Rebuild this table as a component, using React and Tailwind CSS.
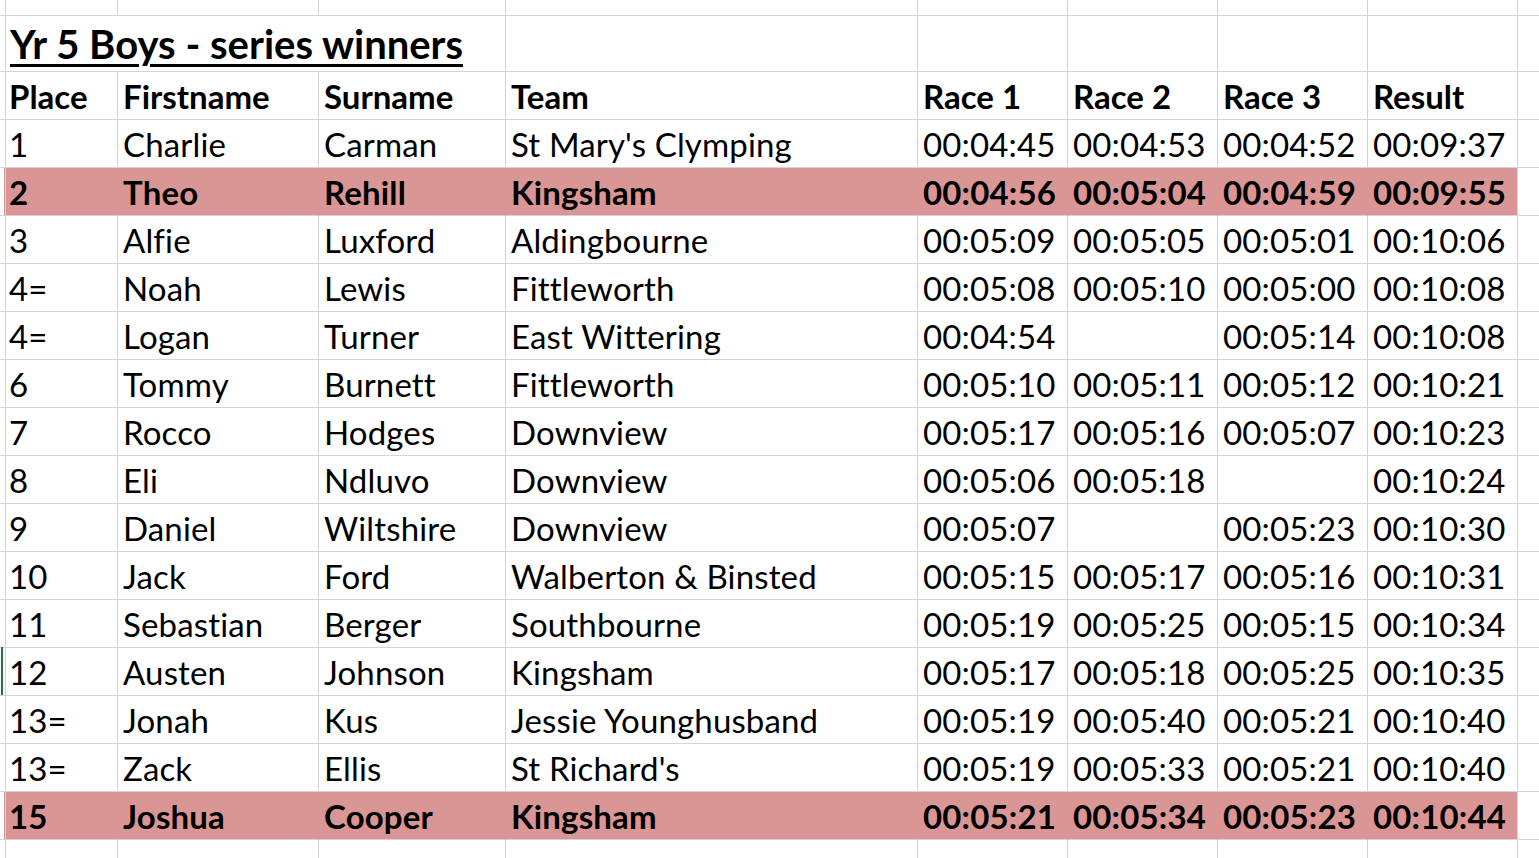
const rows = [
  ['1', 'Charlie', 'Carman', "St Mary's Clymping", '00:04:45', '00:04:53', '00:04:52', '00:09:37'],
  ['2', 'Theo', 'Rehill', 'Kingsham', '00:04:56', '00:05:04', '00:04:59', '00:09:55', true],
  ['3', 'Alfie', 'Luxford', 'Aldingbourne', '00:05:09', '00:05:05', '00:05:01', '00:10:06'],
  ['4=', 'Noah', 'Lewis', 'Fittleworth', '00:05:08', '00:05:10', '00:05:00', '00:10:08'],
  ['4=', 'Logan', 'Turner', 'East Wittering', '00:04:54', '', '00:05:14', '00:10:08'],
  ['6', 'Tommy', 'Burnett', 'Fittleworth', '00:05:10', '00:05:11', '00:05:12', '00:10:21'],
  ['7', 'Rocco', 'Hodges', 'Downview', '00:05:17', '00:05:16', '00:05:07', '00:10:23'],
  ['8', 'Eli', 'Ndluvo', 'Downview', '00:05:06', '00:05:18', '', '00:10:24'],
  ['9', 'Daniel', 'Wiltshire', 'Downview', '00:05:07', '', '00:05:23', '00:10:30'],
  ['10', 'Jack', 'Ford', 'Walberton & Binsted', '00:05:15', '00:05:17', '00:05:16', '00:10:31'],
  ['11', 'Sebastian', 'Berger', 'Southbourne', '00:05:19', '00:05:25', '00:05:15', '00:10:34'],
  ['12', 'Austen', 'Johnson', 'Kingsham', '00:05:17', '00:05:18', '00:05:25', '00:10:35'],
  ['13=', 'Jonah', 'Kus', 'Jessie Younghusband', '00:05:19', '00:05:40', '00:05:21', '00:10:40'],
  ['13=', 'Zack', 'Ellis', "St Richard's", '00:05:19', '00:05:33', '00:05:21', '00:10:40'],
  ['15', 'Joshua', 'Cooper', 'Kingsham', '00:05:21', '00:05:34', '00:05:23', '00:10:44', true],
];

const headers = ['Place', 'Firstname', 'Surname', 'Team', 'Race 1', 'Race 2', 'Race 3', 'Result'];

function Cell({ children, className = '' }) {
  return (
    <div className={`border-r border-b border-[#d4d4d4] pl-[5px] whitespace-nowrap overflow-visible ${className}`}>
      {children}
    </div>
  );
}

export default function App() {
  return (
    <div
      className="w-[1539px] h-[858px] overflow-hidden bg-white text-black text-[33px]"
      style={{ fontFamily: 'Lato, "Liberation Sans", sans-serif' }}
    >
      <div className="grid grid-cols-[4px_114px_201px_187px_412px_150px_150px_150px_150px_40px] auto-rows-[48px] [grid-template-rows:16px_56px]">
        {/* top partial row */}
        <Cell className="pl-0" />
        {Array.from({ length: 9 }).map((_, i) => (
          <Cell key={`t${i}`} />
        ))}

        {/* title row */}
        <Cell className="pl-0" />
        <Cell className="col-span-3 pl-[6px] leading-[57px] text-[40px] font-bold">
          <span className="underline decoration-[3px] underline-offset-[5px]">Yr 5 Boys - series winners</span>
        </Cell>
        {Array.from({ length: 6 }).map((_, i) => (
          <Cell key={`ti${i}`} />
        ))}

        {/* header row */}
        <Cell className="pl-0" />
        {headers.map((h) => (
          <Cell key={h} className="leading-[48px] font-bold">{h}</Cell>
        ))}
        <Cell />

        {rows.map((r, ri) => {
          const hl = r[8] === true;
          return [
            <Cell key={`g${ri}`} className="pl-0 relative">
              {ri === 11 && <div className="absolute left-[1px] top-[-1px] bottom-0 w-[2px] bg-[#217346]" />}
            </Cell>,
            ...r.slice(0, 8).map((v, ci) => (
              <Cell
                key={`${ri}-${ci}`}
                className={`leading-[48px] tracking-[0.15px] ${hl ? 'bg-[#da9694] font-bold' : ''} ${hl && ci < 7 ? 'border-r-[#da9694]' : ''}`}
              >
                {v}
              </Cell>
            )),
            <Cell key={`e${ri}`} />,
          ];
        })}

        {/* bottom partial row */}
        <Cell className="pl-0" />
        {Array.from({ length: 9 }).map((_, i) => (
          <Cell key={`b${i}`} />
        ))}
      </div>
    </div>
  );
}
